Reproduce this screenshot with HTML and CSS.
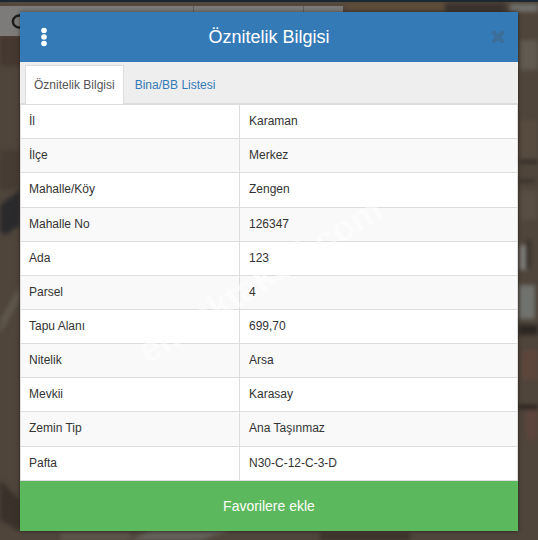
FILE: index.html
```html
<!DOCTYPE html>
<html lang="en">
<head>
    <meta charset="UTF-8">
    <meta name="viewport" content="width=device-width, initial-scale=1.0">
    <title>Öznitelik Bilgisi</title>
    <link rel="stylesheet" href="styles.css">
</head>
<body>
    <!-- darkened satellite map behind the dialog -->
    <svg class="map" width="538" height="540" viewBox="0 0 538 540">
        <defs>
            <filter id="soft" x="-5%" y="-5%" width="110%" height="110%" color-interpolation-filters="sRGB"><feGaussianBlur stdDeviation="2"/></filter>
        </defs>
        <rect width="538" height="540" fill="#4f453b"/>
        <g filter="url(#soft)">
            <rect x="0" y="36" width="20" height="30" fill="#453830"/>
            <rect x="0" y="150" width="20" height="40" fill="#473c34"/>
            <path d="M0 205 L20 190 L20 225 L6 235 L0 232 Z" fill="#2a2a2d"/>
            <path d="M0 320 L20 285 L20 300 L0 335 Z" fill="#5f564c"/>
            <path d="M0 480 L20 500 L20 531 L0 520 Z" fill="#3a312b"/>
            <rect x="520" y="40" width="18" height="30" fill="#605a51"/>
            <rect x="520" y="120" width="18" height="40" fill="#574b40"/>
            <rect x="520" y="160" width="18" height="3" fill="#2b2622"/>
            <rect x="519" y="180" width="16" height="2" fill="#2b2622"/>
            <rect x="520" y="190" width="18" height="30" fill="#594e43"/>
            <rect x="520" y="245" width="6" height="25" fill="#7f807e"/>
            <rect x="519" y="285" width="16" height="34" fill="#70726f"/>
            <rect x="527" y="240" width="3" height="28" fill="#2d2824"/>
            <rect x="519" y="325" width="19" height="10" fill="#2b2623"/>
            <rect x="522" y="350" width="16" height="30" fill="#5c453b"/>
            <rect x="518" y="405" width="20" height="4" fill="#2a211d"/>
            <rect x="526" y="410" width="12" height="30" fill="#5c453c"/>
            <rect x="60" y="533" width="70" height="7" fill="#5f564c"/>
            <path d="M130 540 L150 531 L230 531 L200 540 Z" fill="#64625b"/>
            <rect x="320" y="533" width="90" height="7" fill="#3b332c"/>
            <rect x="345" y="2" width="100" height="10" fill="#5e4c3a"/>
            <rect x="445" y="3" width="60" height="9" fill="#3a332d"/>
            <rect x="510" y="4" width="28" height="8" fill="#6f6f6c"/>
            <rect x="0" y="2" width="345" height="4" fill="#574a3f"/>
        </g>
        <rect width="538" height="2" fill="#1b2731"/>
        <rect y="6" width="343" height="30" fill="#7c7b7a"/>
        <rect x="193" y="6" width="1" height="30" fill="#605f5e"/>
        <rect x="303" y="6" width="1" height="30" fill="#605f5e"/>
        <path d="M22 16 A6.5 6 0 1 0 22 27" fill="none" stroke="#1d1c1b" stroke-width="2.4"/>
    </svg>

    <div class="dialog">
        <div class="dialog-header">
            <svg class="menu-icon" width="8" height="20" viewBox="0 0 8 20">
                <circle cx="4" cy="3.5" r="2.8" fill="#fff"/>
                <circle cx="4" cy="10" r="2.8" fill="#fff"/>
                <circle cx="4" cy="16.5" r="2.8" fill="#fff"/>
            </svg>
            <h4 class="dialog-title">Öznitelik Bilgisi</h4>
            <svg class="close-icon" width="14" height="14" viewBox="0 0 14 14">
                <path d="M3 3 L11 11 M11 3 L3 11" stroke="#3d6d99" stroke-width="4.4" stroke-linecap="round"/>
            </svg>
        </div>

        <ul class="tabs">
            <li class="tab active">Öznitelik Bilgisi</li>
            <li class="tab">Bina/BB Listesi</li>
        </ul>

        <div class="table-wrap">
            <table class="info-table">
                <tr><td>İl</td><td>Karaman</td></tr>
                <tr><td>İlçe</td><td>Merkez</td></tr>
                <tr class="tall"><td>Mahalle/Köy</td><td>Zengen</td></tr>
                <tr><td>Mahalle No</td><td>126347</td></tr>
                <tr><td>Ada</td><td>123</td></tr>
                <tr><td>Parsel</td><td>4</td></tr>
                <tr><td>Tapu Alanı</td><td>699,70</td></tr>
                <tr><td>Nitelik</td><td>Arsa</td></tr>
                <tr><td>Mevkii</td><td>Karasay</td></tr>
                <tr class="tall"><td>Zemin Tip</td><td>Ana Taşınmaz</td></tr>
                <tr><td>Pafta</td><td>N30-C-12-C-3-D</td></tr>
            </table>
            <span class="watermark">emlaktakbil.com</span>
        </div>

        <button class="fav-btn">Favorilere ekle</button>
    </div>
</body>
</html>
```

FILE: styles.css
```css
html, body {
    height: 100%;
}
body {
    font-family: 'Liberation Sans', Arial, sans-serif;
    font-size: 12px;
    color: #333;
    margin: 0;
    padding: 12px 20px 0;
    box-sizing: border-box;
    background-color: #4f453b;
    overflow: hidden;
}
.map {
    position: absolute;
    left: 0;
    top: 0;
}
.dialog {
    position: relative;
    display: flex;
    flex-direction: column;
    background-color: #fff;
    box-shadow: 0 0 4px rgba(0,0,0,0.5);
}
.dialog-header {
    display: flex;
    align-items: center;
    height: 50px;
    padding: 0 13px 0 20px;
    background-color: #337ab7;
    color: white;
}
.menu-icon {
    flex: none;
}
.dialog-title {
    flex: 1;
    margin: 0;
    padding-right: 1px;
    font-size: 18px;
    font-weight: normal;
    text-align: center;
}
.close-icon {
    flex: none;
}
.tabs {
    display: flex;
    gap: 2px;
    margin: 0;
    padding: 3px 0 0 5px;
    height: 42px;
    box-sizing: border-box;
    list-style: none;
    background-color: #eee;
    border-bottom: 1px solid #ddd;
}
.tab {
    padding: 0 8px;
    line-height: 38px;
    height: 39px;
    box-sizing: border-box;
    color: #337ab7;
    border: 1px solid transparent;
    border-bottom: none;
}
.tab.active {
    background-color: #fff;
    color: #555;
    border-color: #ddd;
}
.table-wrap {
    position: relative;
    overflow: hidden;
    height: 377px;
}
.info-table {
    width: 100%;
    border-collapse: collapse;
    table-layout: fixed;
}
.info-table tr {
    height: 34px;
}
.info-table tr.tall {
    height: 35px;
}
.info-table td {
    position: relative;
    z-index: 2;
    padding: 8px;
    line-height: 17px;
    vertical-align: top;
    border: 1px solid #ddd;
}
.info-table td:first-child {
    width: 202px;
}
.info-table td:last-child {
    padding-left: 9px;
}
.info-table tr:nth-child(even) {
    background-color: #f9f9f9;
}
.watermark {
    position: absolute;
    z-index: 1;
    left: 100px;
    top: 155px;
    font-size: 36px;
    font-weight: bold;
    color: rgba(255,255,255,0.5);
    transform: rotate(-32deg);
    white-space: nowrap;
    pointer-events: none;
}
.fav-btn {
    height: 50px;
    border: none;
    padding: 0;
    background-color: #5cb85c;
    color: white;
    font-family: inherit;
    font-size: 14px;
    cursor: pointer;
}
```
